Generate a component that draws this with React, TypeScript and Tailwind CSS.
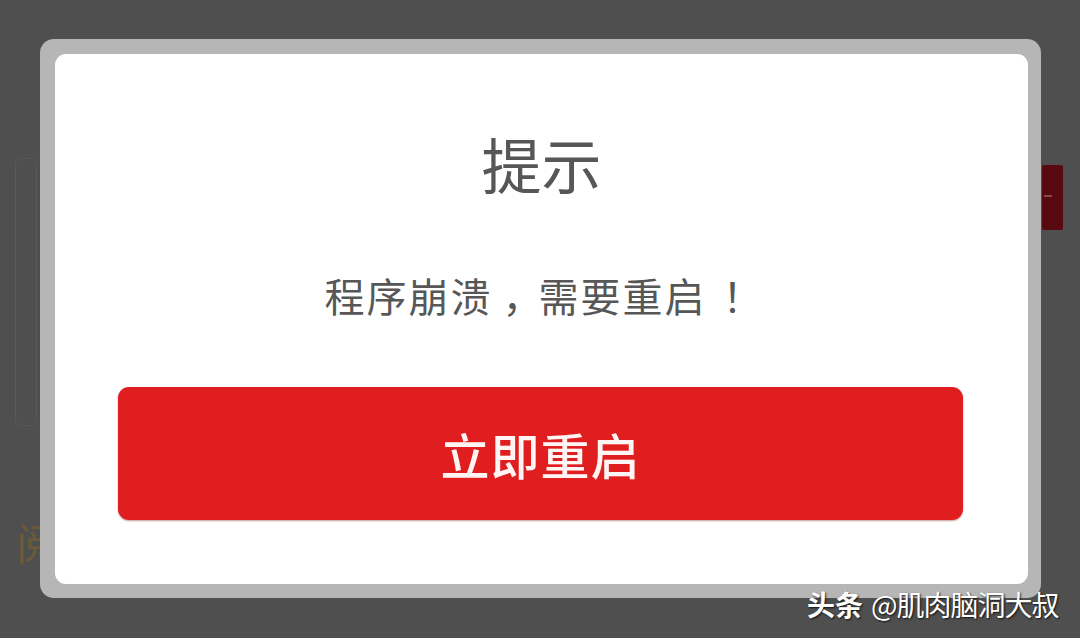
import React from "react";

export default function App() {
  const font = { fontFamily: '"Noto Sans CJK SC", "Noto Sans", sans-serif' };
  return (
    <div className="relative w-[1080px] h-[638px] overflow-hidden bg-[#4f4f4f]" style={font}>
      {/* dimmed page behind the dialog */}
      <div className="absolute left-[15px] top-[158px] w-[22px] h-[268px] rounded-[6px] border border-[#595959]" />
      <div className="absolute left-[16px] top-[518px] text-[44px] leading-[48px] text-[#6b5a3a]">阅</div>
      <div className="absolute left-[1042px] top-[165px] w-[21px] h-[65px] rounded-[2px] bg-[#580a10]">
        <div className="mt-[30px] ml-[2px] w-[8px] h-[2px] bg-[#8a4a4a]" />
      </div>

      {/* dialog overlay */}
      <div className="absolute left-[40px] top-[39px] w-[1001px] h-[559px] rounded-[14px] bg-[#b6b6b6] pl-[15px] pr-[13px] pt-[15px] pb-[14px]">
        <div className="w-full h-full rounded-[11px] bg-white flex flex-col items-center pt-[79px]">
          <div className="h-[60px] leading-[60px] text-[60px] text-[#575757]">提示</div>
          <div className="mt-[82px] ml-[-4px] h-[40px] leading-[40px] text-[40px] text-[#575757] tracking-[2px] flex">
            <span>程序崩溃</span>
            <span className="ml-[10px] tracking-[-4px]">，</span>
            <span>需要重启</span>
            <span className="ml-[16px] tracking-[-8px]">！</span>
          </div>
          <button className="mt-[72px] ml-[-2px] w-[845px] h-[133px] rounded-[11px] bg-[#e11e1f] text-[#fff5f5] text-[49px] leading-[49px] font-medium tracking-[1px] flex items-center justify-center shadow-[0_1px_2px_rgba(120,0,0,0.4)]">
            立即重启
          </button>
        </div>
      </div>

      {/* watermark */}
      <div
        className="absolute left-[807px] top-[586px] text-[28px] leading-[36px] text-white whitespace-nowrap flex gap-[8px]"
        style={{ textShadow: "1px 1px 2px rgba(0,0,0,0.8)" }}
      >
        <span className="font-bold">头条</span>
        <span className="tracking-[-1px]">@肌肉脑洞大叔</span>
      </div>
    </div>
  );
}
